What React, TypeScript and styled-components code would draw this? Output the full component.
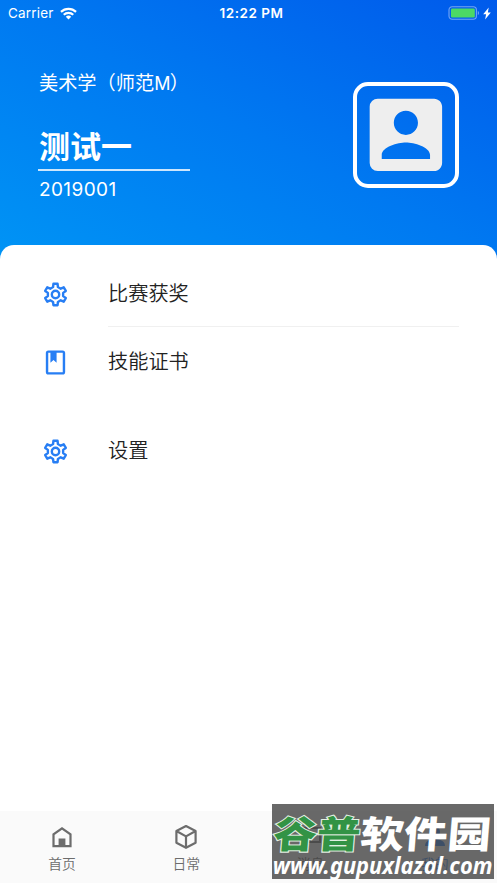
import React from 'react';
import styled, { createGlobalStyle } from 'styled-components';

const GlobalStyle = createGlobalStyle`
  * { box-sizing: border-box; }
  body { margin: 0; background: #fff; font-family: Inter, "Noto Sans CJK SC", sans-serif; }
`;

const Screen = styled.div`
  position: relative;
  width: 497px;
  height: 883px;
  display: flex;
  flex-direction: column;
  overflow: hidden;
  background: #fff;
`;

const Header = styled.header`
  height: 259px;
  flex: none;
  color: #fff;
  background: linear-gradient(to top right, #0094f5 0%, #0079f1 50%, #005aeb 100%);
`;

const StatusBar = styled.div`
  height: 26px;
  padding: 0 6px 0 8px;
  display: grid;
  grid-template-columns: 1fr auto 1fr;
  align-items: center;
  font-size: 13.5px;
  line-height: 26px;
`;

const StatusLeft = styled.div`
  display: flex;
  align-items: center;
  gap: 6px;
  letter-spacing: 0.2px;
`;

const Clock = styled.div`
  padding-left: 4px;
  font-weight: 600;
  font-size: 13.5px;
  letter-spacing: 0.5px;
`;

const StatusRight = styled.div`
  display: flex;
  justify-content: flex-end;
  align-items: center;
  gap: 3px;
`;

const Profile = styled.section`
  display: flex;
  justify-content: space-between;
  padding: 41px 38px 0 38px;
`;

const Identity = styled.div`
  width: 152px;
  white-space: nowrap;
`;

const Major = styled.div`
  height: 30px;
  padding-left: 1px;
  font-size: 19.2px;
  line-height: 32px;
`;

const Latin = styled.span`
  display: inline-block;
  width: 15.5px;
  font-size: 18px;
`;

const Name = styled.h1`
  margin: 28px 0 0;
  height: 46px;
  padding-left: 1px;
  font-size: 31px;
  font-weight: 700;
  line-height: 43px;
  border-bottom: 2px solid rgba(255, 255, 255, 0.8);
`;

const StudentId = styled.div`
  margin-top: 4px;
  padding-left: 1px;
  font-size: 19px;
  line-height: 30px;
  letter-spacing: 0.4px;
`;

const AvatarFrame = styled.div`
  width: 106px;
  height: 106px;
  margin-top: 15px;
  border: 4px solid #fff;
  border-radius: 15px;
  display: flex;
  align-items: center;
  justify-content: center;
  svg { flex: none; }
`;

const Sheet = styled.main`
  flex: 1;
  margin-top: -14px;
  padding: 14px 38px 0 41px;
  border-radius: 14px 14px 0 0;
  background: #fff;
`;

const MenuRow = styled.div<{ $gap?: number }>`
  display: flex;
  align-items: center;
  height: 68px;
  margin-top: ${(p) => p.$gap ?? 0}px;
  color: #277ef4;
`;

const MenuIcon = styled.span`
  width: 67px;
  display: flex;
  padding-top: 2px;
`;

const MenuLabel = styled.span<{ $divided?: boolean }>`
  flex: 1;
  height: 100%;
  line-height: 70px;
  font-size: 20.2px;
  font-weight: 350;
  color: #222;
  border-bottom: ${(p) => (p.$divided ? '1px solid #f0f0f0' : 'none')};
`;

const TabBar = styled.nav`
  height: 72px;
  flex: none;
  display: grid;
  grid-template-columns: repeat(4, 1fr);
  background: #fafafa;
`;

const Tab = styled.div<{ $active?: boolean }>`
  display: flex;
  flex-direction: column;
  align-items: center;
  padding-top: 12px;
  font-size: 13.8px;
  font-weight: 350;
  line-height: 22px;
  color: ${(p) => (p.$active ? '#277ef4' : '#6c6c6c')};
  svg { margin-bottom: 2px; }
`;

const Watermark = styled.div`
  position: absolute;
  left: 272px;
  top: 804px;
  width: 222px;
  height: 75px;
  display: flex;
  flex-direction: column;
  align-items: center;
  background: rgba(68, 68, 68, 0.8);
  color: #fff;
`;

const Brand = styled.div`
  height: 48px;
  padding-top: 4px;
  font-family: "Noto Sans CJK SC", sans-serif;
  font-weight: 900;
  font-size: 43.5px;
  line-height: 50px;
  white-space: nowrap;
  transform: scaleY(0.86) skewX(-4deg);
`;

const BrandGreen = styled.span`
  color: #329345;
  -webkit-text-stroke: 2.5px #e2efe2;
  paint-order: stroke fill;
`;

const Site = styled.div`
  font-family: "Noto Sans", sans-serif;
  font-style: italic;
  font-weight: 700;
  font-size: 24px;
  line-height: 25px;
  white-space: nowrap;
  transform: scaleX(0.91);
`;

const Wifi = () => (
  <svg width="17" height="13" viewBox="0 0 17 13" fill="#fff">
    <path d="M.2 4.1a11.7 11.7 0 0 1 16.6 0l-1.5 1.6a9.6 9.6 0 0 0-13.6 0z" />
    <path d="M3 7a7.8 7.8 0 0 1 11 0l-1.5 1.6a5.7 5.7 0 0 0-8 0z" />
    <path d="M5.8 9.8a3.9 3.9 0 0 1 5.4 0l-2.7 2.7z" />
  </svg>
);

const Battery = () => (
  <svg width="32" height="15" viewBox="0 0 32 15">
    <rect x="1" y=".7" width="27.4" height="12.6" rx="3.2" fill="none" stroke="#fff" strokeOpacity=".45" strokeWidth="1.1" />
    <rect x="3" y="2.5" width="23.8" height="9" rx="1.3" fill="#4cd964" />
    <path d="M29.8 4.7q2.4 2.2 0 4.6z" fill="#fff" fillOpacity=".45" />
  </svg>
);

const Bolt = () => (
  <svg width="8" height="13" viewBox="0 0 8 13" fill="#fff">
    <path d="M5.7.4.2 7.3h2.9L2.1 12.6 7.8 5.5H4.9z" />
  </svg>
);

const Avatar = () => (
  <svg width="96.6" height="96.6" viewBox="0.1 0.1 24 24" fill="#eee">
    <path d="M3 5v14a2 2 0 0 0 2 2h14c1.1 0 2-.9 2-2V5c0-1.1-.9-2-2-2H5a2 2 0 0 0-2 2zm12 4c0 1.66-1.34 3-3 3s-3-1.34-3-3 1.34-3 3-3 3 1.34 3 3zm-9 8c0-2 4-3.1 6-3.1s6 1.1 6 3.1v1H6v-1z" />
  </svg>
);

// Outline of a six-toothed gear centred on the origin.
const polar = (r: number, deg: number) => {
  const a = ((deg - 90) * Math.PI) / 180;
  return `${(r * Math.cos(a)).toFixed(2)} ${(r * Math.sin(a)).toFixed(2)}`;
};
const gearPath =
  'M' +
  [0, 60, 120, 180, 240, 300]
    .flatMap((t) => [polar(7.8, t - 18), polar(10.9, t - 11), polar(10.9, t + 11), polar(7.8, t + 18)])
    .join('L') +
  'Z';

const GearIcon = () => (
  <svg width="29" height="29" viewBox="-14.5 -14.5 29 29" fill="none" stroke="currentColor" strokeWidth="2.4" strokeLinejoin="round">
    <path d={gearPath} />
    <circle r="3.7" />
  </svg>
);

const BookIcon = () => (
  <svg width="29" height="29" viewBox="0 0 24 24">
    <rect x="5" y="3" width="14" height="18" rx="1.1" fill="none" stroke="currentColor" strokeWidth="2" />
    <path d="M7.8 3h5.1v9.3l-2.55-2.4L7.8 12.3z" fill="currentColor" />
  </svg>
);

const HomeIcon = () => (
  <svg width="28" height="28" viewBox="0 0 28 28">
    <path d="M5.5 23.2V11.4L14 5.3l8.5 6.1v11.8z" fill="none" stroke="currentColor" strokeWidth="2.2" />
    <path d="M10.6 15.4h6.8v8h-6.8z" fill="currentColor" />
  </svg>
);

const CubeIcon = () => (
  <svg width="28" height="28" viewBox="0 0 28 28" fill="none" stroke="currentColor" strokeWidth="2.2" strokeLinejoin="round">
    <path d="M14 3.1 23.6 8v11.8L14 24.8 4.4 19.8V8zM4.4 8 14 13.4 23.6 8M14 13.4v11.4" />
  </svg>
);

const MessageIcon = () => (
  <svg width="28" height="28" viewBox="0 0 28 28" fill="none" stroke="currentColor" strokeWidth="2">
    <path d="M5 5h18v14H10l-5 4z" />
  </svg>
);

const PersonIcon = () => (
  <svg width="28" height="28" viewBox="0 0 28 28" fill="currentColor">
    <ellipse cx="14" cy="9" rx="5" ry="6" />
    <path d="M4 23c0-5 5-7 10-7s10 2 10 7z" />
  </svg>
);

export default function App() {
  return (
    <>
      <GlobalStyle />
      <Screen>
        <Header>
          <StatusBar>
            <StatusLeft>Carrier <Wifi /></StatusLeft>
            <Clock>12:22 PM</Clock>
            <StatusRight><Battery /><Bolt /></StatusRight>
          </StatusBar>
          <Profile>
            <Identity>
              <Major>美术学（师范<Latin>M</Latin>）</Major>
              <Name>测试一</Name>
              <StudentId>2019001</StudentId>
            </Identity>
            <AvatarFrame><Avatar /></AvatarFrame>
          </Profile>
        </Header>
        <Sheet>
          <MenuRow>
            <MenuIcon><GearIcon /></MenuIcon>
            <MenuLabel $divided>比赛获奖</MenuLabel>
          </MenuRow>
          <MenuRow>
            <MenuIcon><BookIcon /></MenuIcon>
            <MenuLabel>技能证书</MenuLabel>
          </MenuRow>
          <MenuRow $gap={21}>
            <MenuIcon><GearIcon /></MenuIcon>
            <MenuLabel>设置</MenuLabel>
          </MenuRow>
        </Sheet>
        <TabBar>
          <Tab><HomeIcon />首页</Tab>
          <Tab><CubeIcon />日常</Tab>
          <Tab><MessageIcon />消息</Tab>
          <Tab $active><PersonIcon />我的</Tab>
        </TabBar>
        <Watermark>
          <Brand><BrandGreen>谷普</BrandGreen>软件园</Brand>
          <Site>www.gupuxlazal.com</Site>
        </Watermark>
      </Screen>
    </>
  );
}
